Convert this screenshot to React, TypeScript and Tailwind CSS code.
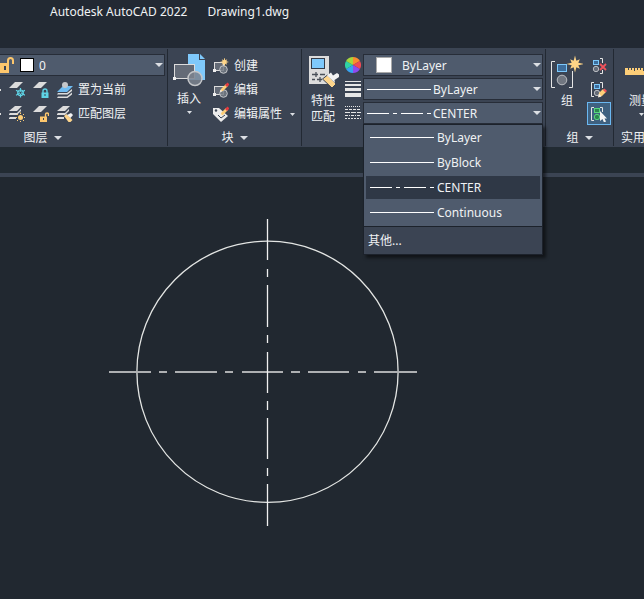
import React, { useState } from "react";

type IconProps = { children: React.ReactNode; w?: number; h?: number };

function Icon({ children, w = 16, h = 16 }: IconProps) {
  return (
    <svg width={w} height={h} viewBox={`0 0 ${w} ${h}`} fill="none" aria-hidden="true" className="block shrink-0">
      {children}
    </svg>
  );
}

function Caret() {
  return (
    <Icon w={8} h={4}>
      <path d="M0 0H8L4 4Z" fill="#dcdfe4" />
    </Icon>
  );
}

function SmallCaret() {
  return (
    <Icon w={5} h={3}>
      <path d="M0 0H5L2.5 3Z" fill="#dcdfe4" />
    </Icon>
  );
}

const LAYER = "M0 6L6 0H14L8 6Z";

function Stack() {
  return (
    <g fill="#dcdcdc">
      <path d="M0 5L6 0H13L8 5Z" />
      <path d="M0 8L1 7H8L12 3V5L8 9H0Z" />
      <path d="M0 12L1 11H7V13H0Z" />
    </g>
  );
}

function Padlock({ open = false, color }: { open?: boolean; color: string }) {
  return (
    <g>
      <path d={open ? "M12.5 11V8.5Q12.5 7 14 7T15.5 8.5V10" : "M10 11V9Q10 7 12 7T14 9V11"} stroke={color} strokeWidth="1.4" />
      <path d={open ? "M7 10.5H14V16H7Z" : "M8.5 10.5H15.5V16H8.5Z"} fill={color} />
      <path d={open ? "M10 12H11V14H10Z" : "M11.5 12H12.5V14H11.5Z"} fill="#3b4453" />
    </g>
  );
}

function Pencil() {
  return (
    <g>
      <path d="M8 7L13 2L15 4L10 9L7.5 9.5Z" fill="#fdce78" />
      <path d="M12 3L14.5 0.5L16.5 2.5L14 5Z" fill="#e5393f" />
      <path d="M7.5 7.5L7 10L9.5 9.5Z" fill="#f6efe2" />
    </g>
  );
}

function BlockShape() {
  return (
    <g>
      <rect x="1.5" y="4.5" width="9" height="8" fill="#646b77" stroke="#dcdcdc" />
      <circle cx="10.5" cy="11.5" r="3.8" fill="#747b85" fillOpacity=".85" stroke="#c4c6c9" />
      <path d="M0 11H3V14H0Z" fill="#eee" />
    </g>
  );
}

function Star({ cx, cy, s }: { cx: number; cy: number; s: number }) {
  const points = Array.from({ length: 16 }, (_, i) => {
    const radius = i % 2 ? s * 0.42 : i % 4 ? s * 0.8 : s;
    const angle = (i * Math.PI) / 8;
    return `${cx + radius * Math.sin(angle)},${cy - radius * Math.cos(angle)}`;
  }).join(" ");
  return <polygon points={points} fill="#fdd487" />;
}

function GroupShapes({ green = false }: { green?: boolean }) {
  return (
    <g>
      <rect x="3.5" y="2.5" width="5" height="4" fill={green ? "#2c8751" : "#3d6d9b"} stroke={green ? "#58d77f" : "#7cc8fb"} />
      <circle cx="6" cy="11" r="2.7" fill={green ? "#2c8751" : "#646b77"} stroke={green ? "#58d77f" : "#b9bcc1"} />
    </g>
  );
}

function FreezeIcon() {
  return (
    <Icon>
      <path d={LAYER} fill="#dcdcdc" />
      <g stroke="#5fd4e6" strokeWidth="1.2">
        <path d="M11.5 6V15.500M7 8.300L16 13.300M7 13.300L16 8.300" />
        <circle cx="11.500" cy="10.800" r="2.800" />
      </g>
      <circle cx="11.500" cy="10.800" r="1" fill="#3b4453" />
    </Icon>
  );
}

function LockLayerIcon() {
  return (
    <Icon>
      <path d={LAYER} fill="#dcdcdc" />
      <Padlock color="#5fd4e6" />
    </Icon>
  );
}

function SetCurrentIcon() {
  return (
    <Icon>
      <path d="M0 12.500L1 11H10L15 7V9L10.500 12.500Z" fill="#dcdcdc" />
      <path d="M0 16L1 14.500H10L15 10.500V12.500L10.500 16Z" fill="#dcdcdc" />
      <path d="M0 10L6 4H16L10 10Z" fill="#6fbcf2" />
      <circle cx="8" cy="3" r="3" fill="#c5c7ca" />
    </Icon>
  );
}

function ThawIcon() {
  return (
    <Icon>
      <Stack />
      <circle cx="11.500" cy="11.500" r="4" fill="#3b4453" />
      <circle cx="11.500" cy="11.500" r="2.500" fill="#fdce78" />
      <path d="M11.500 6.500V8M11.500 15V16.500M6.500 11.500H8M15 11.500H16.500M8 8L9 9M14 14L15 15M15 8L14 9M8 15L9 14" stroke="#fdce78" />
    </Icon>
  );
}

function UnlockLayerIcon() {
  return (
    <Icon>
      <path d={LAYER} fill="#dcdcdc" />
      <Padlock open color="#fdc76d" />
    </Icon>
  );
}

function MatchLayerIcon() {
  return (
    <Icon>
      <Stack />
      <path d="M7 10L9.500 8L15.500 14L13.500 16H11.500Z" fill="#fdd58c" />
      <path d="M10 9L14 7L16 9L13.500 12Z" fill="#f3f3f3" />
    </Icon>
  );
}

function InsertIcon() {
  return (
    <Icon w={32} h={34}>
      <path d="M15 0H26V6H32V26H15Z" fill="#7fc9fb" />
      <path d="M27 0L32 5H27Z" fill="#7fc9fb" />
      <rect x="1.500" y="10.500" width="20" height="14" fill="#646b77" stroke="#dcdcdc" />
      <circle cx="22" cy="24.500" r="7" fill="#7b838e" fillOpacity=".85" stroke="#c4c6c9" strokeWidth="1.500" />
      <path d="M0 23H3V26H0Z" fill="#eee" />
    </Icon>
  );
}

function CreateIcon() {
  return (
    <Icon>
      <BlockShape />
      <Star cx={11.5} cy={4} s={4.8} />
    </Icon>
  );
}

function EditIcon() {
  return (
    <Icon>
      <BlockShape />
      <Pencil />
    </Icon>
  );
}

function EditAttrIcon() {
  return (
    <Icon>
      <path d="M0 2H6L15 10L8 16L0 8Z" fill="#ececec" />
      <circle cx="3" cy="4.500" r="1.200" fill="#3b4453" />
      <path d="M5 9L8 12L12 9" stroke="#3b4453" />
      <Pencil />
    </Icon>
  );
}

function MatchPropsIcon() {
  return (
    <Icon w={32} h={34}>
      <path d="M0 1H20V29H0Z" fill="#dcdcdc" />
      <rect x="2.500" y="3.500" width="13" height="10" fill="#7fc9fb" stroke="#343b48" />
      <path d="M3 19.500H9M11 19.500H16M3 24.500H6M8 24.500H13M7 17V22M11 22V27" stroke="#4a5059" strokeWidth="1.300" />
      <path d="M13.500 24L18.500 20L27 29L23 33Z" fill="#fdd58c" stroke="#3b4453" />
      <path d="M18 20.500L22 17.500L24 20.500L28 18L30 19.500V22L25.500 25L26 28Z" fill="#f3f3f3" />
    </Icon>
  );
}

function ColorWheelIcon() {
  const colors = ["#fb8c2f", "#ef4a55", "#8e4bf0", "#36a3f2", "#2fd3a5", "#a6d63d"];
  return (
    <Icon>
      {colors.map((color, i) => {
        const a = (i * Math.PI) / 3;
        const b = a + Math.PI / 3;
        const d = `M8 8L${8 + 8 * Math.sin(a)} ${8 - 8 * Math.cos(a)}A8 8 0 0 1 ${8 + 8 * Math.sin(b)} ${8 - 8 * Math.cos(b)}Z`;
        return <path key={color} d={d} fill={color} />;
      })}
    </Icon>
  );
}

function LineweightIcon() {
  return (
    <Icon>
      <path d="M0 0H16V1H0ZM0 3H16V5H0ZM0 7H16V10H0ZM0 12H16V16H0Z" fill="#e6e6e6" />
    </Icon>
  );
}

function LinetypeIcon() {
  return (
    <Icon>
      <g stroke="#e6e6e6">
        <path d="M0 1.500H16" strokeDasharray="1 1" />
        <path d="M0 4.500H16" strokeDasharray="3 1" />
        <path d="M0 7.500H16" strokeDasharray="5 1" />
        <path d="M0 10.500H16" strokeDasharray="3 1 1 1" />
        <path d="M0 13.500H16" strokeDasharray="2 1" />
      </g>
    </Icon>
  );
}

function GroupIcon() {
  return (
    <Icon w={32} h={34}>
      <path d="M4 6.500H.500V32.500H4M18 32.500H21.500V16" stroke="#e6e6e6" />
      <rect x="6.500" y="9.500" width="9" height="7" fill="#3d6d9b" stroke="#7cc8fb" />
      <circle cx="11" cy="25" r="4.800" fill="#717781" stroke="#b9bcc1" />
      <Star cx={24} cy={9} s={8.5} />
    </Icon>
  );
}

function UngroupIcon() {
  return (
    <Icon>
      <g transform="translate(-1 0)">
        <GroupShapes />
      </g>
      <path d="M9 .500H11.500V5M11.500 12V15.500H9" stroke="#e6e6e6" />
      <path d="M9 6L15 12M15 6L9 12" stroke="#f0525b" strokeWidth="1.800" />
    </Icon>
  );
}

function GroupEditIcon() {
  return (
    <Icon>
      <path d="M3 .500H.500V14.500H3M9 .500H11.500V6" stroke="#e6e6e6" />
      <GroupShapes />
      <path d="M8 11L12 7L15 10L11 14L7.500 15Z" fill="#fdce78" />
      <path d="M12 8L13.500 6.500L16 9L14.500 10.500Z" fill="#f0525b" />
      <path d="M8 11.500L7 15.500L10.500 14.500Z" fill="#f6efe2" />
    </Icon>
  );
}

function GroupSelectIcon() {
  return (
    <Icon>
      <path d="M3 1.500H.500V14.500H3M9 1.500H11.500V6" stroke="#e6e6e6" />
      <GroupShapes green />
      <path d="M9 5V15L11.500 13L13 16.500L15 15.500L13.500 12.500H16Z" fill="#f6f6f6" />
    </Icon>
  );
}

function MeasureIcon() {
  return (
    <Icon w={32} h={8}>
      <path d="M0 1H32V8H0Z" fill="#fdce78" />
      <path d="M3.500 1V3M6.500 1V3M9.500 1V4M12.500 1V3M15.500 1V3M18.500 1V4M21.500 1V3M24.500 1V3M27.500 1V4" stroke="#3b4453" />
    </Icon>
  );
}

function LineSample({ dashed = false }: { dashed?: boolean }) {
  return (
    <Icon w={64} h={1}>
      <path d="M0 .5H64" stroke="#fff" strokeDasharray={dashed ? "22 4 4 4" : undefined} />
    </Icon>
  );
}

type ComboProps = {
  label: string;
  value: string;
  options: string[];
  children: React.ReactNode;
  className: string;
};

function Combo({ label, value, options, children, className }: ComboProps) {
  return (
    <div className={`flex h-[22px] items-center border border-[#272d38] bg-[#4f5b6d] ${className}`}>
      {children}
      <select aria-label={label} defaultValue={value} className="h-5 min-w-0 flex-1 appearance-none bg-transparent pt-0.5 text-xs outline-none">
        {options.map((option) => (
          <option key={option}>{option}</option>
        ))}
      </select>
      <Caret />
    </div>
  );
}

function Panel({ title, className, children }: { title: string; className: string; children?: React.ReactNode }) {
  return (
    <section className={`my-px flex flex-col border-r border-[#222933] ${className}`}>
      <div className="h-[78px]">{children}</div>
      {title && (
        <button className="flex h-5 items-center justify-center gap-1.5 pt-1 whitespace-nowrap">
          {title}
          <Caret />
        </button>
      )}
    </section>
  );
}

function ToolButton({ label, children }: { label: string; children: React.ReactNode }) {
  return (
    <button aria-label={label} title={label} className="flex size-4 items-center justify-center">
      {children}
    </button>
  );
}

function TextTool({ icon, label, caret = false }: { icon: React.ReactNode; label: string; caret?: boolean }) {
  return (
    <button className="flex h-6 items-center gap-[5px] whitespace-nowrap">
      {icon}
      {label}
      {caret && (
        <span className="pl-[3px]">
          <SmallCaret />
        </span>
      )}
    </button>
  );
}

const LINETYPES = ["ByLayer", "ByBlock", "CENTER", "Continuous"];

function LinetypeMenu() {
  const [selected, setSelected] = useState("CENTER");
  return (
    <div className="absolute top-[22px] right-0 left-0 z-10 border border-[#1c222b] bg-[#4f5b6d] shadow-[3px_3px_3px_rgba(0,0,0,0.5)]">
      <ul role="listbox" aria-label="线型" className="flex flex-col gap-0.5 px-0.5 pt-px pb-0.5">
        {LINETYPES.map((name) => (
          <li key={name} role="option" aria-selected={name === selected}>
            <button
              onClick={() => setSelected(name)}
              className={`flex h-[23px] w-full items-center gap-[3px] pl-1 ${name === selected ? "bg-[#2f3846]" : ""}`}
            >
              <LineSample dashed={name === "CENTER"} />
              {name}
            </button>
          </li>
        ))}
      </ul>
      <button className="flex h-7 w-full items-center border-t border-[#1c222b] bg-[#3b4453] pl-1">其他...</button>
    </div>
  );
}

const HORIZONTAL_DASHES = "M1 154H43M51 154H59M67 154H109M117 154H125M134 154H175M183 154H192M200 154H241M250 154H258M266 154H309";
const VERTICAL_DASHES = "M159.500 1V42M159.500 51V59M159.500 67V109M159.500 117V125M159.500 134V175M159.500 183V192M159.500 200V241M159.500 250V258M159.500 266V308";

function Drawing() {
  return (
    <svg width="310" height="310" viewBox="0 0 310 310" fill="none" role="img" aria-label="Drawing1" className="block">
      <circle cx="159.500" cy="153.800" r="130.600" stroke="#e4e6e4" strokeWidth="1.300" />
      <path d={HORIZONTAL_DASHES} stroke="#aeb0b2" strokeWidth="2" />
      <path d={VERTICAL_DASHES} stroke="#f0f0f0" strokeWidth="1.300" />
    </svg>
  );
}

export default function App() {
  return (
    <div className="flex min-h-screen flex-col overflow-hidden bg-[#212830] font-['Noto_Sans','Noto_Sans_CJK_SC',sans-serif] text-xs leading-4 text-[#f0f2f4]">
      <header className="flex h-12 items-start gap-5 bg-[#222933] pt-1 pl-[50px]">
        <h1>Autodesk AutoCAD 2022</h1>
        <span>Drawing1.dwg</span>
      </header>

      <div className="flex h-[99px] bg-[#3b4453]">
        <Panel title="图层" className="w-[168px] shrink-0 [&>button]:mr-[82px]">
          <div className="pt-[5px]">
            <Combo label="图层" value="0" options={["0"]} className="mr-0.5 border-l-0 pr-px">
              <Icon w={14}>
                <path d="M8 7V3.500Q8 1 10.500 1T13 3.500V7" stroke="#fdc76d" strokeWidth="2" />
                <path d="M0 6H9V16H0Z" fill="#fdc76d" />
                <path d="M4 9H6V13H4Z" fill="#3b4453" />
              </Icon>
              <span className="mr-[5px] ml-1.5 size-3.5 shrink-0 border border-black bg-white" />
            </Combo>
            {[
              { freeze: <FreezeIcon />, lock: <LockLayerIcon />, apply: <SetCurrentIcon />, names: ["冻结", "锁定", "置为当前"] },
              { freeze: <ThawIcon />, lock: <UnlockLayerIcon />, apply: <MatchLayerIcon />, names: ["解冻", "解锁", "匹配图层"] },
            ].map((row) => (
              <div key={row.names[0]} className="flex h-6 items-center pt-1">
                <span className="mr-2 h-0.5 w-px bg-[#dcdcdc]" />
                <div className="flex items-center gap-2">
                  <ToolButton label={row.names[0]}>{row.freeze}</ToolButton>
                  <ToolButton label={row.names[1]}>{row.lock}</ToolButton>
                  <TextTool icon={row.apply} label={row.names[2]} />
                </div>
              </div>
            ))}
          </div>
        </Panel>

        <Panel title="块" className="w-[134px] shrink-0">
          <div className="flex gap-2 pt-[5px] pl-[5px]">
            <button className="flex w-8 flex-col items-center">
              <InsertIcon />
              <span className="mt-[3px] mb-1">插入</span>
              <SmallCaret />
            </button>
            <div className="flex flex-col">
              <TextTool icon={<CreateIcon />} label="创建" />
              <TextTool icon={<EditIcon />} label="编辑" />
              <TextTool icon={<EditAttrIcon />} label="编辑属性" caret />
            </div>
          </div>
        </Panel>

        <Panel title="" className="w-[244px] shrink-0">
          <div className="flex gap-1 pl-[7px]">
            <button className="flex w-8 flex-col items-center pt-1.5">
              <MatchPropsIcon />
              <span className="mt-1 mr-1 w-6">特性匹配</span>
            </button>
            <div className="flex flex-col gap-2 pt-2">
              <ToolButton label="颜色"><ColorWheelIcon /></ToolButton>
              <ToolButton label="线宽"><LineweightIcon /></ToolButton>
              <ToolButton label="线型"><LinetypeIcon /></ToolButton>
            </div>
            <div className="-ml-0.5 flex w-[180px] flex-col gap-0.5 pt-[5px]">
              <Combo label="对象颜色" value="ByLayer" options={["ByLayer", "ByBlock"]} className="pr-px pl-3">
                <span className="mr-2.5 size-4 shrink-0 border border-[#a9a9a9] bg-white" />
              </Combo>
              <Combo label="对象线宽" value="ByLayer" options={["ByLayer", "ByBlock"]} className="gap-0.5 pr-px pl-[3px]">
                <LineSample />
              </Combo>
              <div className="relative">
                <Combo label="对象线型" value="CENTER" options={LINETYPES} className="gap-0.5 pr-px pl-[3px]">
                  <LineSample dashed />
                </Combo>
                <LinetypeMenu />
              </div>
            </div>
          </div>
        </Panel>

        <Panel title="组" className="w-[68px] shrink-0">
          <div className="flex gap-1 pl-[5px]">
            <button className="flex w-8 flex-col items-center pt-1.5">
              <GroupIcon />
              <span className="mt-1">组</span>
            </button>
            <div className="flex flex-col items-center pt-[5px]">
              <button aria-label="解除编组" className="flex h-6 w-6 items-center justify-center"><UngroupIcon /></button>
              <button aria-label="组编辑" className="flex h-6 w-6 items-center justify-center"><GroupEditIcon /></button>
              <button aria-label="启用组选择" className="flex h-[23px] w-6 items-center justify-center border border-[#6ab8f2] bg-[#3f6180]">
                <GroupSelectIcon />
              </button>
            </div>
          </div>
        </Panel>

        <section className="my-px flex min-w-0 flex-1 flex-col overflow-hidden">
          <div className="h-[78px]">
            <button className="ml-[11px] flex w-8 flex-col items-center pt-[18px]">
              <MeasureIcon />
              <span className="mt-[18px] mb-1 whitespace-nowrap">测量</span>
              <SmallCaret />
            </button>
          </div>
          <button className="flex h-5 items-center pt-1 pl-[7px] whitespace-nowrap">实用工具</button>
        </section>
      </div>

      <div className="h-[30px] border-b-4 border-[#3b4453] bg-[#222b33]" />

      <main className="flex-1 bg-[#212830] pt-[41px] pl-[108px]">
        <Drawing />
      </main>
    </div>
  );
}
